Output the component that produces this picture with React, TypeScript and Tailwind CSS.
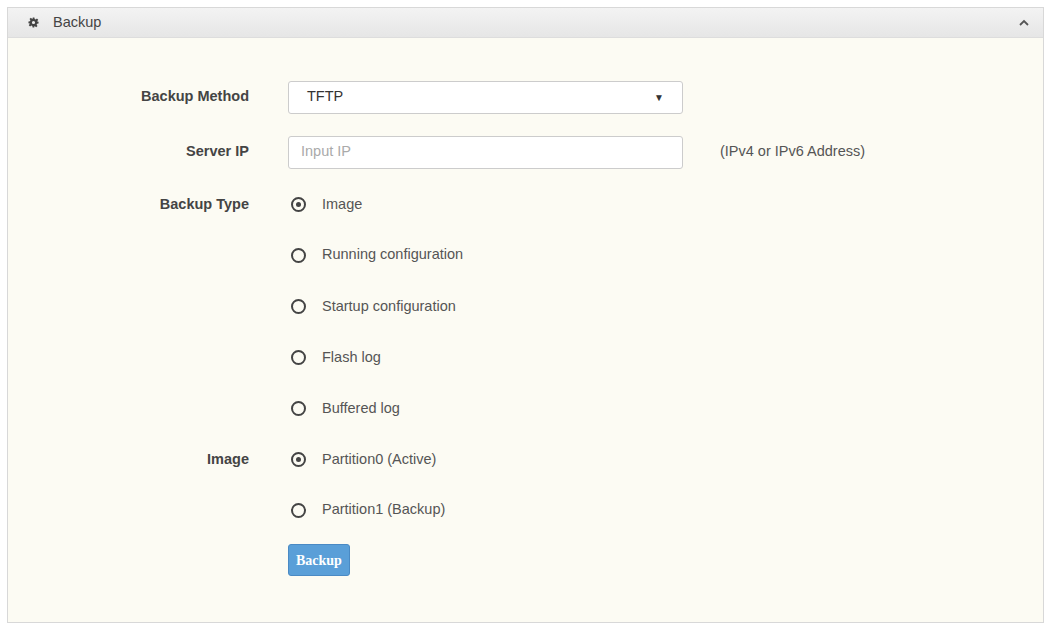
import React from "react";

const Radio = ({ checked }: { checked?: boolean }) => (
  <span className="w-[15px] h-[15px] rounded-full border-2 border-[#444] flex items-center justify-center shrink-0">
    {checked && <span className="w-[5px] h-[5px] rounded-full bg-[#444]" />}
  </span>
);

const Row = ({ label, children, h = "h-[51px]" }: { label?: string; children: React.ReactNode; h?: string }) => (
  <div className={`flex items-center ${h}`}>
    <div className="w-[241px] text-right font-bold text-[#444]">{label}</div>
    <div className="ml-[39px] flex items-center flex-1">{children}</div>
  </div>
);

const Opt = ({ text, checked }: { text: string; checked?: boolean }) => (
  <div className="flex items-center ml-[3px]">
    <Radio checked={checked} />
    <span className="ml-[16px] text-[#555]">{text}</span>
  </div>
);

export default function App() {
  return (
    <div className="w-[1051px] h-[623px] bg-white pt-[7px] px-[7px] text-[14.5px]" style={{ fontFamily: '"Liberation Sans", Arial, sans-serif' }}>
      <div className="border border-[#d8d8d8] h-[616px] bg-[#fcfbf3] flex flex-col">
        <div className="h-[30px] bg-gradient-to-b from-[#f3f3f3] to-[#e6e6e6] border-b border-[#ddd] flex items-center px-[20px] text-[#444]">
          <svg width="11" height="11" viewBox="0 0 24 24" fill="#444"><path d="M12 8.5a3.5 3.5 0 1 0 0 7a3.5 3.5 0 0 0 0-7zM10 1h4l.6 3.2 2.2 1 2.7-1.9 2.8 2.8-1.9 2.7 1 2.2L23 10v4l-3.2.6-1 2.2 1.9 2.7-2.8 2.8-2.7-1.9-2.2 1L14 23h-4l-.6-3.2-2.2-1-2.7 1.9-2.8-2.8 1.9-2.7-1-2.2L1 14v-4l3.2-.6 1-2.2L3.3 4.5l2.8-2.8 2.7 1.9 2.2-1z" fillRule="evenodd"/></svg>
          <span className="ml-[14px]">Backup</span>
          <span className="ml-auto mr-[-6px] text-[#555] text-[12px]">
            <svg width="10" height="8" viewBox="0 0 10 8"><path d="M1 6l4-4 4 4" stroke="#555" strokeWidth="1.8" fill="none"/></svg>
          </span>
        </div>
        <div className="pt-[32px]">
          <Row label="Backup Method" h="h-[54px]">
            <div className="w-[395px] h-[33px] bg-white border border-[#ccc] rounded-[3px] flex items-center px-[18px] text-[#333]">
              <span>TFTP</span>
              <span className="ml-auto text-[10px]">▼</span>
            </div>
          </Row>
          <Row label="Server IP" h="h-[56px]">
            <div className="w-[395px] h-[33px] bg-white border border-[#ccc] rounded-[3px] flex items-center px-[12px] text-[#aaa]">Input IP</div>
            <span className="ml-[37px] text-[#555]">(IPv4 or IPv6 Address)</span>
          </Row>
          <Row label="Backup Type" h="h-[49px]"><Opt text="Image" checked /></Row>
          <Row h="h-[52px]"><Opt text="Running configuration" /></Row>
          <Row><Opt text="Startup configuration" /></Row>
          <Row><Opt text="Flash log" /></Row>
          <Row><Opt text="Buffered log" /></Row>
          <Row label="Image"><Opt text="Partition0 (Active)" checked /></Row>
          <Row h="h-[50px]"><Opt text="Partition1 (Backup)" /></Row>
          <Row h="h-[50px]">
            <button className="bg-[#5a9fd8] text-white font-bold rounded-[3px] px-[7px] h-[32px] text-[14px] border border-[#4a8ac4]" style={{ fontFamily: '"Liberation Serif", serif' }}>Backup</button>
          </Row>
        </div>
      </div>
    </div>
  );
}
